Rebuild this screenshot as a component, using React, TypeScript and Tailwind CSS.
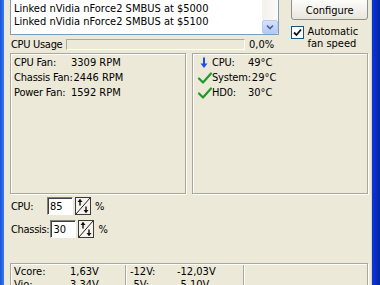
const fans = [
  { label: "CPU Fan:", value: "3309 RPM" },
  { label: "Chassis Fan:", value: "2446 RPM" },
  { label: "Power Fan:", value: "1592 RPM" },
];

const temps = [
  { label: "CPU:", value: "49°C", ok: false },
  { label: "System:", value: "29°C", ok: true },
  { label: "HD0:", value: "30°C", ok: true },
];

function CheckIcon() {
  return (
    <svg width="14" height="12" viewBox="0 0 14 12">
      <path d="M1 6.5L5 10.5L13 1.5" stroke="#1E9A2A" strokeWidth="2.2" fill="none" strokeLinecap="round" strokeLinejoin="round" />
    </svg>
  );
}

function DownArrow() {
  return (
    <svg width="14" height="12" viewBox="0 0 14 12">
      <path d="M6 0.5V9" stroke="#1F4FE0" strokeWidth="2" />
      <path d="M2.5 6.5L6 11L9.5 6.5Z" fill="#1F4FE0" />
    </svg>
  );
}

function SpinIcon() {
  return (
    <svg width="16" height="18" viewBox="0 0 16 18" className="shrink-0">
      <rect x="0.5" y="0.5" width="15" height="17" fill="#F4F3EE" stroke="#3A3A3A" />
      <path d="M1 17L15 1" stroke="#222" strokeWidth="1" />
      <path d="M5 2.5V8.5" stroke="#111" strokeWidth="1.4" />
      <path d="M2.5 5L5 2L7.5 5Z" fill="#111" />
      <path d="M11 9.5V15.5" stroke="#111" strokeWidth="1.4" />
      <path d="M8.5 13L11 16L13.5 13Z" fill="#111" />
    </svg>
  );
}

function SpinRow({ label, value }: { label: string; value: string }) {
  return (
    <div className="flex h-[18px] items-center">
      <span className="min-w-[37px] shrink-0 pl-[1px] pr-[1px] tracking-[-0.3px]">{label}</span>
      <div className="flex h-[18px] w-[26px] shrink-0 items-center border border-b-white border-l-[#808080] border-r-white border-t-[#808080] bg-white pl-[2px] shadow-[inset_1px_1px_0_#404040]">
        {value}
      </div>
      <div className="ml-[2px]">
        <SpinIcon />
      </div>
      <span className="ml-[4px]">%</span>
    </div>
  );
}

export default function App() {
  return (
    <div className="flex h-[285px] w-[380px] overflow-hidden whitespace-nowrap bg-[#ECE9D8] font-['DejaVu_Sans',sans-serif] font-stretch-condensed text-[11px] leading-[13px] text-black">
      <div className="w-[4px] shrink-0 bg-gradient-to-r from-[#1552DA] to-[#3A78EE]" />

      <div className="flex min-w-0 flex-1 flex-col pl-[6px] pr-[3px]">
        <div className="flex gap-[12px]">
          <div className="flex w-[271px] flex-col">
            <div className="flex h-[35px] border border-t-0 border-[#7F9DB9] bg-white">
              <div className="flex-1 overflow-hidden pl-[3px] pt-[2px]">
                <div>Linked nVidia nForce2 SMBUS at $5000</div>
                <div>Linked nVidia nForce2 SMBUS at $5100</div>
              </div>
              <div className="flex w-[16px] flex-col">
                <div className="flex-1 bg-gradient-to-r from-[#F3F1EA] to-[#FBFAF8]" />
                <div className="flex h-[14px] items-center justify-center rounded-[2px] border border-[#B9CBF3] bg-gradient-to-b from-[#D6E2FC] to-[#B3C9F4]">
                  <svg width="8" height="6" viewBox="0 0 8 6">
                    <path d="M1 1.5L4 4.5L7 1.5" stroke="#4D6185" strokeWidth="1.6" fill="none" />
                  </svg>
                </div>
              </div>
            </div>
            <div className="mt-[4px] flex h-[11px] items-center">
              <span className="w-[56px] shrink-0 pl-[1px] tracking-[-0.3px]">CPU Usage</span>
              <div className="h-[11px] w-[179px] shrink-0 border border-b-white border-l-[#ACA899] border-r-white border-t-[#ACA899] bg-[#ECE9D8]" />
              <span className="ml-[4px]">0,0%</span>
            </div>
          </div>

          <div className="flex w-[77px] flex-col">
            <button className="-mt-[2px] flex h-[22px] items-center justify-center rounded-[3px] border border-[#8E8F8F] bg-gradient-to-b from-[#FDFDFB] to-[#E8E6DC] pt-[3px]">
              Configure
            </button>
            <div className="mt-[6px] flex">
              <div className="flex h-[13px] w-[13px] shrink-0 items-center justify-center border border-[#1C5180] bg-white">
                <svg width="9" height="9" viewBox="0 0 9 9">
                  <path d="M1 4.5L3.5 7L8 1.5" stroke="#111" strokeWidth="1.8" fill="none" />
                </svg>
              </div>
              <div className="ml-[3px] leading-[12px]">
                <div>Automatic</div>
                <div>fan speed</div>
              </div>
            </div>
          </div>
        </div>

        <div className="mt-[3px] flex gap-[6px]">
          <div className="h-[141px] w-[177px] border border-[#ACA899] pl-[3px] pt-[1px] leading-[15px] shadow-[1px_1px_0_#fff,inset_1px_1px_0_#fff]">
            {fans.map((f) => (
              <div key={f.label} className="flex">
                <span className="min-w-[57px] pr-[1px] tracking-[-0.2px]">{f.label}</span>
                <span>{f.value}</span>
              </div>
            ))}
          </div>
          <div className="h-[141px] w-[177px] border border-[#ACA899] pl-[4px] pt-[1px] leading-[15px] shadow-[1px_1px_0_#fff,inset_1px_1px_0_#fff]">
            {temps.map((t) => (
              <div key={t.label} className="flex items-center">
                <span className="flex w-[15px] justify-center">{t.ok ? <CheckIcon /> : <DownArrow />}</span>
                <span className="min-w-[36px] pr-[1px] tracking-[-0.2px]">{t.label}</span>
                <span>{t.value}</span>
              </div>
            ))}
          </div>
        </div>

        <div className="mt-[3px] flex flex-col gap-[5px]">
          <SpinRow label="CPU:" value="85" />
          <SpinRow label="Chassis:" value="30" />
        </div>

        <div className="mt-[25px] flex h-[40px] border border-[#ACA899] pt-[1px] shadow-[1px_1px_0_#fff,inset_1px_1px_0_#fff]">
          <div className="w-[114px] pl-[3px]">
            <div className="flex"><span className="w-[56px]">Vcore:</span><span>1,63V</span></div>
            <div className="flex"><span className="w-[56px]">Vio:</span><span>3,34V</span></div>
          </div>
          <div className="w-[118px] border-l border-[#ACA899] pl-[4px] shadow-[inset_1px_0_0_#fff]">
            <div className="flex"><span className="w-[47px]">-12V:</span><span>-12,03V</span></div>
            <div className="flex"><span className="w-[47px]">-5V:</span><span>-5,10V</span></div>
          </div>
          <div className="flex-1 border-l border-[#ACA899] shadow-[inset_1px_0_0_#fff]" />
        </div>
      </div>

      <div className="w-[9px] shrink-0 border-l border-[#D8D5C8] bg-gradient-to-r from-[#0B36D8] to-[#0724A8]" />
    </div>
  );
}
